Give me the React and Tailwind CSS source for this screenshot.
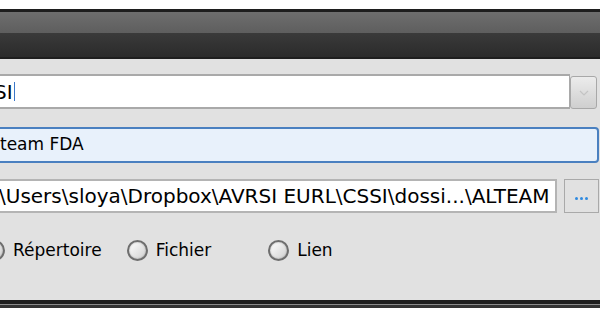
import React from 'react'

const font = { fontFamily: '"DejaVu Sans", Verdana, sans-serif' }

const Radio = ({ label, className = '' }) => (
  <div className={`flex items-center gap-[8px] ${className}`}>
    <span className="w-[21px] h-[21px] rounded-full border-2 border-[#6e6e6e] bg-gradient-to-br from-[#ffffff] to-[#d0d0d0] shadow-[inset_0_0_2px_rgba(0,0,0,0.3)] shrink-0" />
    <span className="text-[17px] text-black">{label}</span>
  </div>
)

const App = () => {
  return (
    <div className="w-[600px] h-[316px] bg-white overflow-hidden flex flex-col" style={font}>
      <div className="h-[9px] shrink-0" />
      {/* title bar */}
      <div className="h-[50px] shrink-0 flex flex-col border-t-[3px] border-b-[2px] border-[#1e1e1e]">
        <div className="h-[21px] bg-gradient-to-b from-[#6e6e6e] to-[#5e5e5e]" />
        <div className="flex-1 bg-gradient-to-b from-[#3a3a3a] to-[#2b2b2b]" />
      </div>

      {/* form */}
      <div className="h-[241px] shrink-0 bg-[#e1e1e1] flex flex-col">
        <div className="mt-[15px] flex items-stretch h-[35px] mr-[3px]">
          <div className="flex-1 bg-white border-y-2 border-r border-[#a9a9a9] flex items-center overflow-hidden">
            <span className="text-[20px] text-black -ml-[6px] whitespace-nowrap leading-none">SI</span>
            <span className="w-[1px] h-[19px] bg-[#3a78c8] ml-[1px]" />
          </div>
          <div className="w-[27px] mt-[2px] rounded-[3px] border border-[#a8a8a8] bg-gradient-to-b from-[#ececec] to-[#cfcfcf] flex items-center justify-center">
            <svg width="10" height="6" viewBox="0 0 10 6">
              <path d="M1 1 L5 5 L9 1" fill="none" stroke="#c4c4c4" strokeWidth="1.2" />
            </svg>
          </div>
        </div>

        <div className="mt-[18px] h-[36px] mr-[1px] -ml-[4px] rounded-[4px] border-2 border-[#4a80c0] bg-[#e8f1fb] flex items-center overflow-hidden">
          <span className="text-[17px] text-black ml-[2px] whitespace-nowrap">team FDA</span>
        </div>

        <div className="mt-[16px] flex items-stretch h-[34px] mr-[1px]">
          <div className="w-[557px] bg-white border-2 border-l-0 border-[#b4b4b4] flex items-center overflow-hidden">
            <span className="text-[20px] text-black -ml-[1px] whitespace-nowrap leading-none">\Users\sloya\Dropbox\AVRSI EURL\CSSI\dossi...\ALTEAM</span>
          </div>
          <div className="ml-[7px] flex-1 border border-[#a9a9a9] bg-[#e1e1e1] flex items-center justify-center">
            <span className="flex gap-[2px] mt-[4px]">
              <span className="w-[3px] h-[3px] bg-[#2f8ae0] rounded-full" />
              <span className="w-[3px] h-[3px] bg-[#2f8ae0] rounded-full" />
              <span className="w-[3px] h-[3px] bg-[#2f8ae0] rounded-full" />
            </span>
          </div>
        </div>

        <div className="mt-[25px] flex items-center -ml-[16px]">
          <Radio label="Répertoire" />
          <Radio label="Fichier" className="ml-[25px]" />
          <Radio label="Lien" className="ml-[57px]" />
        </div>
      </div>

      {/* bottom border */}
      <div className="h-[8px] shrink-0 flex flex-col">
        <div className="h-[4px] bg-[#1e1e1e]" />
        <div className="h-[1px] bg-[#8a8a8a]" />
        <div className="flex-1 bg-[#333333]" />
      </div>
      <div className="flex-1 bg-white" />
    </div>
  )
}

export default App
